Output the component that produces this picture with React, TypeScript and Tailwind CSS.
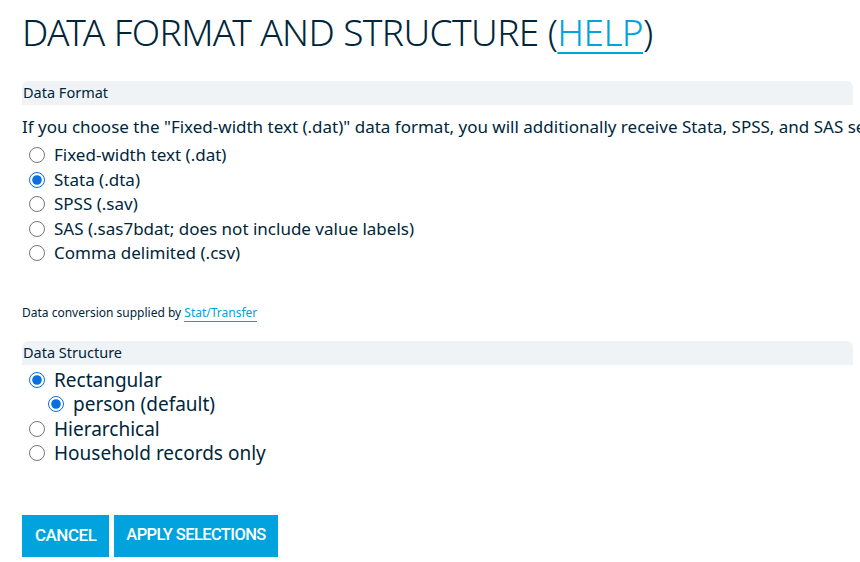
import React from 'react';

const font = { fontFamily: '"Noto Sans", "Open Sans", sans-serif' };
const radioCls = 'w-[16px] h-[16px] m-0 ml-[7px] mr-[9px] shrink-0 accent-[#0b6fde]';

function Radio({ label, checked, name, indent }: { label: string; checked?: boolean; name: string; indent?: boolean }) {
  return (
    <label className={`flex items-center h-[24.5px] leading-[24px] ${indent ? 'pl-[19px]' : ''}`}>
      <input type="radio" name={name} defaultChecked={checked} className={radioCls} />
      <span className="whitespace-nowrap">{label}</span>
    </label>
  );
}

function SectionBar({ title }: { title: string }) {
  return (
    <div className="w-[831px] h-[24px] bg-[#f0f3f6] rounded-t-[6px] flex items-center px-[1px] text-[14.5px] text-[#00263a]">
      {title}
    </div>
  );
}

export default function App() {
  return (
    <div className="w-[860px] h-[562px] overflow-hidden bg-white text-[#00263a]" style={font}>
      <div className="pl-[22px] pt-[8px]">
        {/* Heading */}
        <h1 className="text-[37px] leading-[48px] font-light tracking-[-0.6px] whitespace-nowrap">
          DATA FORMAT AND STRUCTURE (
          <a href="#" className="text-[#00a3dd] underline decoration-2 underline-offset-[6px]">
            HELP
          </a>
          )
        </h1>

        {/* Data format */}
        <div className="mt-[25px]">
          <SectionBar title="Data Format" />
          <p className="mt-[11px] text-[17px] leading-[22px] whitespace-nowrap">
            If you choose the "Fixed-width text (.dat)" data format, you will additionally receive Stata, SPSS, and SAS setup files.
          </p>
          <div className="text-[17px] mt-[5px]">
            <Radio name="fmt" label="Fixed-width text (.dat)" />
            <Radio name="fmt" label="Stata (.dta)" checked />
            <Radio name="fmt" label="SPSS (.sav)" />
            <Radio name="fmt" label="SAS (.sas7bdat; does not include value labels)" />
            <Radio name="fmt" label="Comma delimited (.csv)" />
          </div>
          <p className="mt-[39px] text-[12px] leading-[16px]">
            Data conversion supplied by{' '}
            <a href="#" className="text-[#00a3dd] border-b border-[#00a3dd]">
              Stat/Transfer
            </a>
          </p>
        </div>

        {/* Data structure */}
        <div className="mt-[20px]">
          <SectionBar title="Data Structure" />
          <div className="text-[19px] mt-[3px]">
            <Radio name="st" label="Rectangular" checked />
            <Radio name="sub" label="person (default)" checked indent />
            <Radio name="st" label="Hierarchical" />
            <Radio name="st" label="Household records only" />
          </div>
        </div>

        {/* Buttons */}
        <div className="flex gap-[5px] mt-[49px]">
          <button
            className="h-[42px] px-[13px] bg-[#00a3dd] text-white text-[17px] font-medium tracking-[-0.5px]"
            style={{ fontFamily: 'Roboto, sans-serif' }}
          >
            CANCEL
          </button>
          <button
            className="h-[42px] px-[12px] bg-[#00a3dd] text-white text-[16.5px] font-medium tracking-[-0.6px]"
            style={{ fontFamily: 'Roboto, sans-serif' }}
          >
            APPLY SELECTIONS
          </button>
        </div>
      </div>
    </div>
  );
}
